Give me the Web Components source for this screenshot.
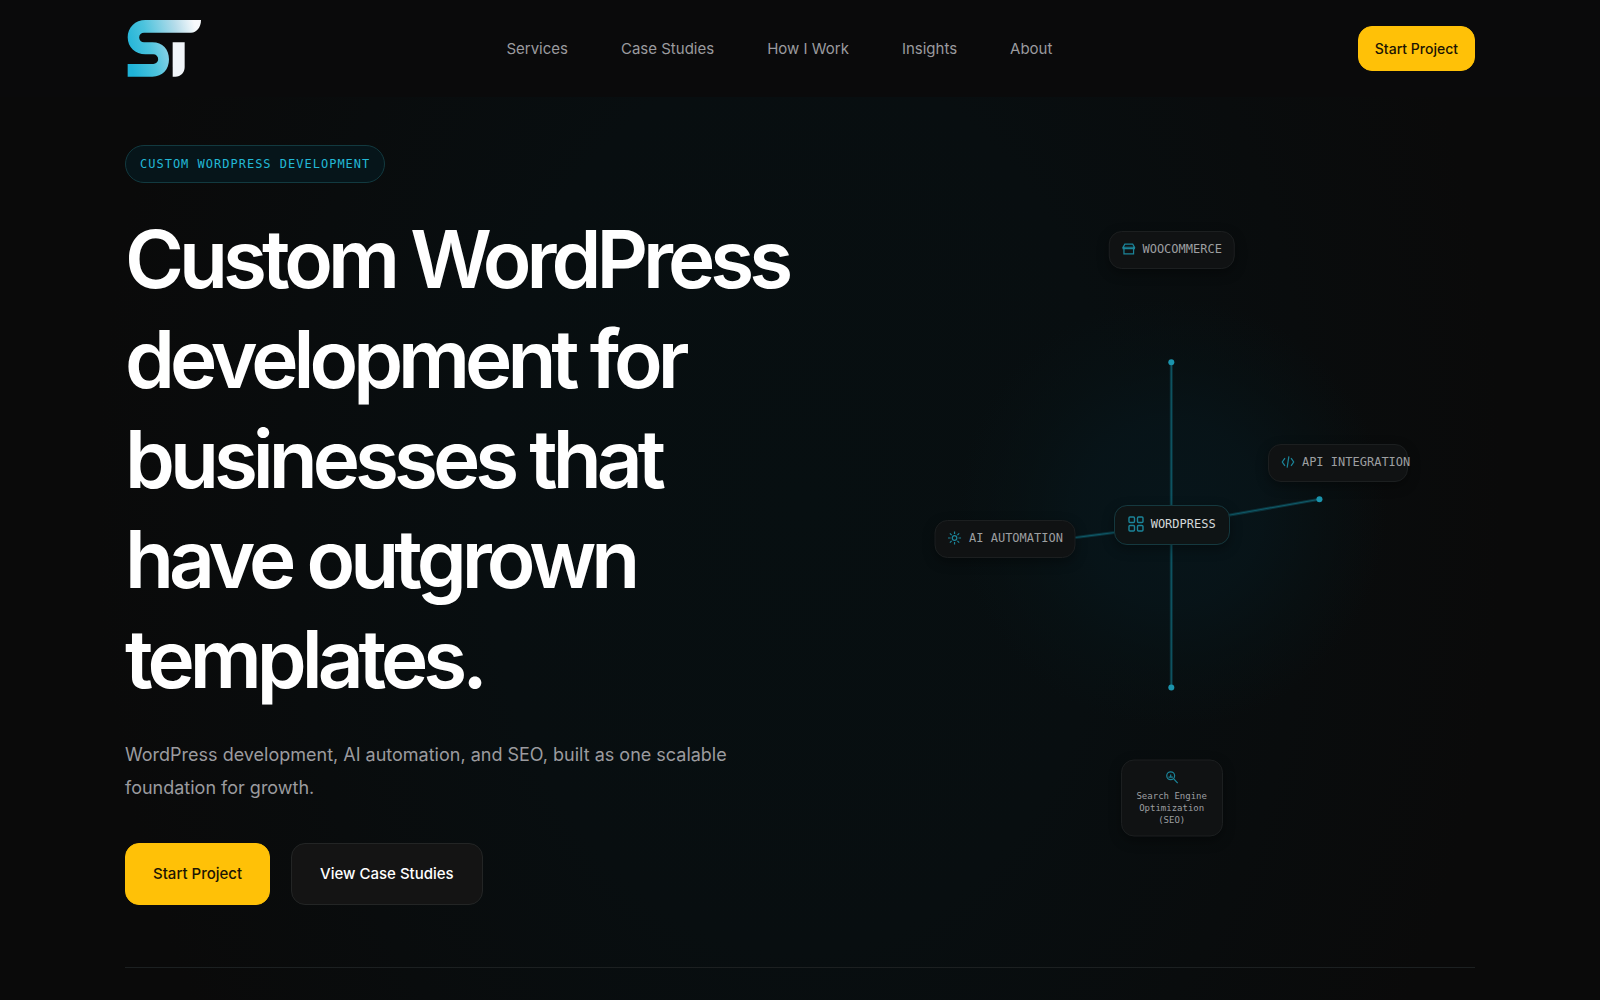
<!DOCTYPE html>
<html lang="en">
<head>
<meta charset="utf-8">
<meta name="viewport" content="width=device-width, initial-scale=1">
<title>Custom WordPress Development</title>
<style>
    body {
        margin: 0;
        background: #0a0a0a;
        color: #fff;
        font-family: Inter, "Liberation Sans", sans-serif;
        --mono: "DejaVu Sans Mono", "Liberation Mono", monospace;
        --teal: #1b8499;
        --cyan: #22b8d6;
        --amber: #ffc107;
        --muted: #9b9b9f;
        --page: 1350px;
    }
</style>
</head>
<body>
<site-header>
    <site-logo slot="logo"></site-logo>
    <nav-link href="#services">Services</nav-link>
    <nav-link href="#case-studies">Case Studies</nav-link>
    <nav-link href="#how-i-work">How I Work</nav-link>
    <nav-link href="#insights">Insights</nav-link>
    <nav-link href="#about">About</nav-link>
    <action-link slot="action" href="#start" size="small">Start Project</action-link>
</site-header>
<hero-section>
    <tag-pill slot="intro">CUSTOM WORDPRESS DEVELOPMENT</tag-pill>
    <span slot="title">Custom WordPress development for businesses that have outgrown templates.</span>
    <span slot="lead">WordPress development, AI automation, and SEO, built as one scalable foundation for growth.</span>
    <action-link slot="actions" href="#start">Start Project</action-link>
    <action-link slot="actions" href="#case-studies" kind="dark">View Case Studies</action-link>
    <service-map slot="visual">
        <map-node icon="store" style="--x: 50%; --y: 5.7%">WOOCOMMERCE</map-node>
        <map-node icon="code" style="--x: 77.4%; --y: 40%; --w: 140px">API INTEGRATION</map-node>
        <map-node icon="cog" style="--x: 22.6%; --y: 52.3%">AI AUTOMATION</map-node>
        <map-node icon="grid" main style="--x: 50%; --y: 50%">WORDPRESS</map-node>
        <map-node icon="search" stacked style="--x: 50%; --y: 94%">Search Engine Optimization (SEO)</map-node>
    </service-map>
</hero-section>

<script>
class SiteLogo extends HTMLElement {
    constructor() {
        super();
        this.attachShadow({mode: "open"}).innerHTML = `
            <style>
            :host { display: block; }
            a, svg { display: block; }
            svg { width: 76px; height: 59px; }
            </style>
            <a href="#top" aria-label="Home">
                <svg viewBox="15 27 228 177">
                    <defs>
                        <linearGradient id="fade" gradientUnits="userSpaceOnUse" x1="23" y1="130" x2="243" y2="70">
                            <stop offset="0" stop-color="#1fb3d8"/>
                            <stop offset=".3" stop-color="#4cc3dd"/>
                            <stop offset=".7" stop-color="#b5dcea"/>
                            <stop offset=".95" stop-color="#f8fafc"/>
                        </linearGradient>
                    </defs>
                    <path fill="url(#fade)" d="M243 30H76C46 30 23 52 23 82s23 51 53 51h24a14.500 14.500 0 0 1 0 29H23v38h74c31 0 50-22 50-52s-19-51-50-51H72a14.500 14.500 0 0 1 0-29h141c17 0 30-16 30-38Z"/>
                    <path fill="#f1f5f9" d="M158 97h36v74c0 17-12 29-28 29h-8Z"/>
                </svg>
            </a>`;
    }
}
customElements.define("site-logo", SiteLogo);

class NavLink extends HTMLElement {
    constructor() {
        super();
        this.attachShadow({mode: "open"});
    }

    connectedCallback() {
        this.shadowRoot.innerHTML = `
            <style>
            :host { display: block; }
            a {
                color: var(--muted);
                font-size: 15px;
                line-height: 24px;
                text-decoration: none;
            }
            a:hover { color: #fff; }
            </style>
            <a href="${this.getAttribute("href")}"><slot></slot></a>`;
    }
}
customElements.define("nav-link", NavLink);

class ActionLink extends HTMLElement {
    constructor() {
        super();
        this.attachShadow({mode: "open"});
    }

    connectedCallback() {
        this.shadowRoot.innerHTML = `
            <style>
            :host { display: block; }
            a {
                display: block;
                box-sizing: border-box;
                padding: 18px 27px;
                border: 1px solid var(--amber);
                border-radius: 14px;
                background: var(--amber);
                color: #1c1503;
                font-size: 15px;
                font-weight: 500;
                line-height: 24px;
                text-decoration: none;
                white-space: nowrap;
            }
            :host([size="small"]) a {
                padding: 11px 16px;
                font-size: 14px;
                line-height: 21px;
            }
            :host([kind="dark"]) a {
                padding: 18px 28px;
                border-color: #232525;
                background: #141414;
                color: #fff;
            }
            </style>
            <a href="${this.getAttribute("href")}"><slot></slot></a>`;
    }
}
customElements.define("action-link", ActionLink);

class SiteHeader extends HTMLElement {
    constructor() {
        super();
        this.attachShadow({mode: "open"}).innerHTML = `
            <style>
            :host {
                display: block;
                padding: 0 48px;
                background: #0a0a0b;
            }
            header {
                display: flex;
                align-items: center;
                justify-content: space-between;
                max-width: var(--page);
                min-height: 97px;
                margin: 0 auto;
            }
            nav {
                display: flex;
                gap: 53px;
            }
            </style>
            <header>
                <slot name="logo"></slot>
                <nav aria-label="Main"><slot></slot></nav>
                <slot name="action"></slot>
            </header>`;
    }
}
customElements.define("site-header", SiteHeader);

class TagPill extends HTMLElement {
    constructor() {
        super();
        this.attachShadow({mode: "open"}).innerHTML = `
            <style>
            :host {
                display: inline-block;
                padding: 8px 14px;
                border: 1px solid #123a40;
                border-radius: 19px;
                background: #06151a;
                color: var(--cyan);
                font-family: var(--mono);
                font-size: 12px;
                line-height: 20px;
                letter-spacing: 1px;
            }
            </style>
            <slot></slot>`;
    }
}
customElements.define("tag-pill", TagPill);

class HeroSection extends HTMLElement {
    constructor() {
        super();
        this.attachShadow({mode: "open"}).innerHTML = `
            <style>
            :host {
                display: block;
                padding: 48px 48px 32px;
                background: radial-gradient(ellipse 44% 110% at 50% 45%, #070f11 0%, #080e10 45%, #0a0a0a 100%);
            }
            .content {
                display: grid;
                grid-template-columns: minmax(0, 1.12fr) minmax(0, 1fr);
                align-items: center;
                gap: 64px;
                max-width: var(--page);
                margin: 0 auto;
                padding-bottom: 62px;
                border-bottom: 1px solid #1c2021;
            }
            .intro { display: flex; }
            h1 {
                margin: 26px 0 0;
                font-size: 80px;
                font-weight: 600;
                line-height: 100px;
                letter-spacing: -5px;
            }
            p {
                max-width: 620px;
                margin: 29px 0 0;
                color: var(--muted);
                font-size: 18px;
                line-height: 33px;
            }
            .actions {
                display: flex;
                gap: 21px;
                margin-top: 39px;
            }
            </style>
            <div class="content">
                <div>
                    <div class="intro"><slot name="intro"></slot></div>
                    <h1><slot name="title"></slot></h1>
                    <p><slot name="lead"></slot></p>
                    <div class="actions"><slot name="actions"></slot></div>
                </div>
                <slot name="visual"></slot>
            </div>`;
    }
}
customElements.define("hero-section", HeroSection);

class ServiceMap extends HTMLElement {
    constructor() {
        super();
        this.attachShadow({mode: "open"}).innerHTML = `
            <style>
            :host {
                display: block;
                position: relative;
                aspect-ratio: 606 / 620;
                background: radial-gradient(circle at 50% 48%, #07151a 0, #07151acc 90px, #07131680 150px, transparent 215px);
            }
            svg {
                display: block;
                width: 100%;
                height: 100%;
            }
            </style>
            <svg viewBox="-303 -310 606 620" aria-hidden="true">
                <g stroke="#127386" stroke-width="3" opacity=".35">
                    <path d="M0 0V-163M0 0V162M0 0 148-26M0 0-148 19"/>
                </g>
                <g stroke="#105b6a" stroke-width="1">
                    <path d="M0 0V-163M0 0V162M0 0 148-26M0 0-148 19"/>
                </g>
                <g fill="#1b94ad">
                    <circle cy="-163" r="3"/>
                    <circle cy="162" r="3"/>
                    <circle cx="148" cy="-26" r="3"/>
                    <circle cx="-148" cy="19" r="3"/>
                </g>
            </svg>
            <slot></slot>`;
    }
}
customElements.define("service-map", ServiceMap);

const icons = {
    store: `<path d="M2.500 6.500v7h11v-7M3.500 2.500h9l2 3.500H1.500ZM1.500 6v1.500h13V6"/>`,
    code: `<path d="M4.500 3.500 1.500 8l3 4.500M11.500 3.500l3 4.500-3 4.500M9 1.500 7 14.500"/>`,
    cog: `<circle cx="8" cy="8" r="2.600"/><path d="M8 .5v3M8 12.500v3M.5 8h3M12.500 8h3M2.700 2.700l2 2M11.300 11.300l2 2M2.700 13.300l2-2M11.300 4.700l2-2"/>`,
    grid: `<rect x="1" y="1" width="5.500" height="5.500" rx="1"/><rect x="9.500" y="1" width="5.500" height="5.500" rx="1"/><rect x="1" y="9.500" width="5.500" height="5.500" rx="1"/><rect x="9.500" y="9.500" width="5.500" height="5.500" rx="1"/>`,
    search: `<circle cx="6.500" cy="6" r="4.500"/><path d="m10 9.500 4.500 5M4 7.500h5M6.500 4.500v3"/>`
};

class MapNode extends HTMLElement {
    constructor() {
        super();
        this.attachShadow({mode: "open"});
    }

    connectedCallback() {
        this.shadowRoot.innerHTML = `
            <style>
            :host {
                position: absolute;
                left: var(--x);
                top: var(--y);
                transform: translate(-50%, -50%);
                display: flex;
                align-items: center;
                gap: 7px;
                box-sizing: border-box;
                width: var(--w, auto);
                padding: 7px 12px 9px;
                border: 1px solid #1c1f20;
                border-radius: 13px;
                background: #101213;
                box-shadow: 0 4px 12px rgba(0, 0, 0, 0.35);
                color: #9d9fa1;
                font-family: var(--mono);
                font-size: 12px;
                line-height: 20px;
                white-space: nowrap;
            }
            svg {
                flex: none;
                width: 14px;
                height: 14px;
                fill: none;
                stroke: var(--teal);
                stroke-width: 1.400;
            }
            :host([main]) {
                padding: 8px 13px 10px;
                border-color: #15393f;
                background: #0e1415;
                color: #d4d8d9;
            }
            :host([main]) svg {
                width: 16px;
                height: 16px;
            }
            :host([stacked]) {
                flex-direction: column;
                gap: 5px;
                width: 102px;
                padding: 10px;
                font-size: 9px;
                line-height: 12px;
                text-align: center;
                white-space: normal;
            }
            </style>
            <svg viewBox="0 0 16 16" aria-hidden="true">${icons[this.getAttribute("icon")]}</svg>
            <span><slot></slot></span>`;
    }
}
customElements.define("map-node", MapNode);
</script>
</body>
</html>
